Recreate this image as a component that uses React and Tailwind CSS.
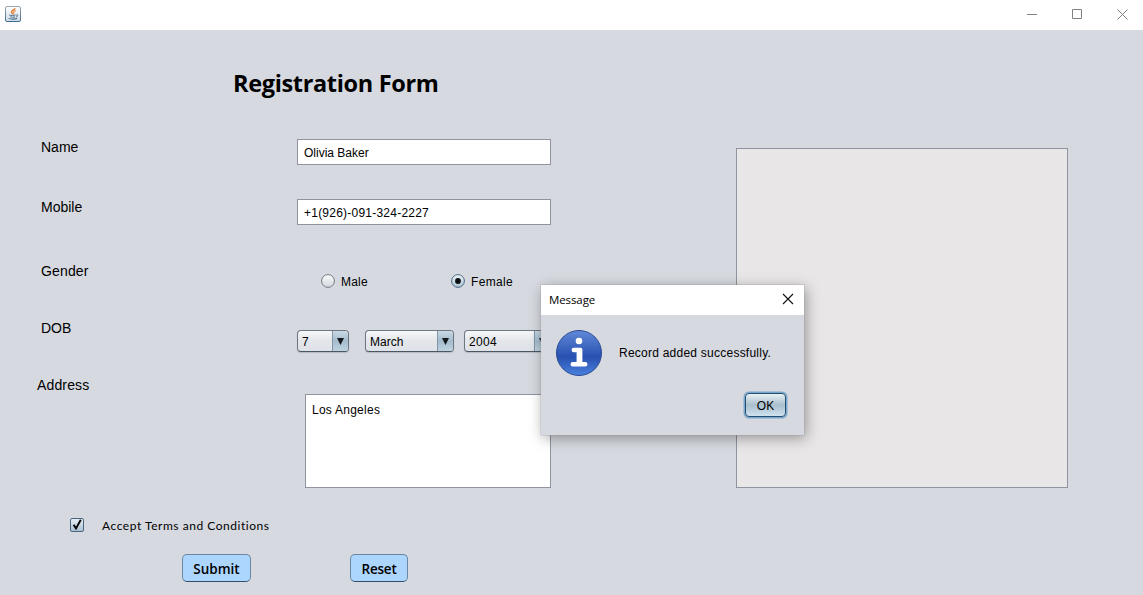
import React from "react";

const SANS = "font-['Liberation_Sans',Arial,sans-serif]";
const HUMAN = "font-['Open_Sans','Noto_Sans',sans-serif]";

function JavaIcon() {
  return (
    <svg width="16" height="16" viewBox="0 0 16 16" fill="none" className="block">
      <defs>
        <linearGradient id="jframe" x1="0" y1="0" x2="0" y2="1">
          <stop offset="0" stopColor="#9aa7b4" />
          <stop offset="1" stopColor="#3f6c8c" />
        </linearGradient>
        <linearGradient id="jback" x1="0" y1="0" x2="0" y2="1">
          <stop offset="0" stopColor="#ffffff" />
          <stop offset="1" stopColor="#cfdbe6" />
        </linearGradient>
      </defs>
      <rect x="0.5" y="0.5" width="15" height="15" rx="1.5" fill="url(#jback)" stroke="url(#jframe)" />
      <path d="M10 2.2C10.2 4 6.4 4.4 6.5 6.2C6.6 7 7.4 7.4 7.6 8.4" stroke="#e27626" strokeWidth="1.4" />
      <path d="M10.8 4.6C8.8 5.3 8.3 5.9 8.9 6.8C9.2 7.3 9.1 7.8 8.5 8.5" stroke="#e58a45" strokeWidth="1.1" />
      <path d="M4.2 9C5.5 9.7 9 9.6 10.6 9" stroke="#4d7390" />
      <path d="M5.2 10.8C6.8 11.4 8.8 11.3 10 10.8" stroke="#4d7390" />
      <path d="M11 8.9C13.4 8.3 13.4 10.6 10.9 11.1" stroke="#4d7390" />
      <path d="M3.6 12.4C5 13.4 10.6 13.3 12.2 12.6" stroke="#4d7390" strokeWidth="1.1" />
    </svg>
  );
}

function TitleBar() {
  return (
    <header className="flex h-[30px] items-start justify-between bg-white">
      <div className="pt-1.5 pl-[5px]">
        <JavaIcon />
      </div>
      <div className="flex items-center gap-[35px] pt-[9px] pr-[15px] text-[#808080]">
        <svg width="11" height="11" viewBox="0 0 11 11" stroke="currentColor" className="overflow-visible"><path d="M2 5.5H12" /></svg>
        <svg width="11" height="11" viewBox="0 0 11 11" fill="none" stroke="currentColor"><path d="M1.5 0.5H10.5V9.5H1.5Z" /></svg>
        <svg width="11" height="11" viewBox="0 0 11 11" stroke="currentColor"><path d="M0.5 0.5L10.5 10.5M10.5 0.5L0.5 10.5" /></svg>
      </div>
    </header>
  );
}

function Label({ children, className = "pl-[41px]" }) {
  return <div className={`w-[297px] shrink-0 text-sm leading-5 ${className}`}>{children}</div>;
}

function TextField({ children, className = "" }) {
  return (
    <div className={`mt-0.5 flex h-[26px] w-[254px] items-center border border-[#8f949e] bg-white pt-px pl-1.5 text-xs ${className}`}>
      {children}
    </div>
  );
}

function Radio({ label, checked, className = "" }) {
  return (
    <div className={`flex h-[14px] items-center text-xs tracking-[0.2px] ${className}`}>
      <svg width="14" height="14" viewBox="0 0 14 14">
        <defs>
          <linearGradient id="radioOff" x1="0" y1="0" x2="0" y2="1">
            <stop offset="0" stopColor="#fbfbfc" />
            <stop offset="1" stopColor="#d3d7dd" />
          </linearGradient>
          <linearGradient id="radioOn" x1="0" y1="0" x2="0" y2="1">
            <stop offset="0" stopColor="#eef4f8" />
            <stop offset="1" stopColor="#a9c1d2" />
          </linearGradient>
        </defs>
        <circle cx="7" cy="7" r="6.4" fill={checked ? "url(#radioOn)" : "url(#radioOff)"} stroke={checked ? "#4c6880" : "#737a85"} />
        {checked && <circle cx="7" cy="7" r="2.9" fill="#0b0d10" />}
      </svg>
      <span className="pt-0.5 pl-1.5">{label}</span>
    </div>
  );
}

function Combo({ value, className, textClass = "" }) {
  return (
    <div className={`flex h-[22px] shrink-0 overflow-hidden rounded-[4px] border border-[#6d7683] border-b-[#4b5663] bg-linear-to-b from-[#f6f7f9] via-[#e3e6ea] to-[#dfe2e8] shadow-[0_1px_1px_#b5bac4] ${className}`}>
      <div className={`flex flex-1 items-center pt-px pl-1 text-xs ${textClass}`}>{value}</div>
      <div className="flex w-4 items-center justify-center border-l border-[#7f95a8] bg-linear-to-b from-[#c9d9e4] via-[#a5bccd] to-[#bfd3e0]">
        <svg width="7" height="7" viewBox="0 0 7 7"><path d="M0 0H7L3.5 7Z" fill="#15181c" /></svg>
      </div>
    </div>
  );
}

function ActionButton({ children, className }) {
  return (
    <div className={`flex h-7 items-center justify-center rounded-[5px] border border-[#6a86a0] border-b-[#33506b] bg-[#add6ff] pt-0.5 text-[13.5px] font-semibold ${HUMAN} ${className}`}>
      {children}
    </div>
  );
}

function MessageDialog() {
  return (
    <div className="absolute top-[285px] left-[541px] flex h-[150px] w-[263px] flex-col bg-[#d6d9df] shadow-[0_0_0_1px_rgba(150,150,155,0.25),2px_3px_13px_rgba(0,0,0,0.36)]">
      <div className="flex h-[30px] items-center justify-between bg-white pr-[11px] pl-2">
        <span className={`text-[11.5px] tracking-[-0.1px] ${HUMAN}`}>Message</span>
        <svg width="10" height="10" viewBox="0 0 10 10" className="-mt-0.5 overflow-visible" stroke="#111" strokeWidth="1.1">
          <path d="M0 0L10 10M10 0L0 10" />
        </svg>
      </div>
      <div className="flex items-center gap-4 pt-[14px] pl-[14px]">
        <svg width="48" height="48" viewBox="0 0 48 48">
          <defs>
            <linearGradient id="infoBall" x1="0" y1="0" x2="0" y2="1">
              <stop offset="0" stopColor="#6189d8" />
              <stop offset="0.4" stopColor="#3a63be" />
              <stop offset="0.58" stopColor="#2850b0" />
              <stop offset="1" stopColor="#4a80de" />
            </linearGradient>
          </defs>
          <circle cx="24" cy="24" r="22.5" fill="url(#infoBall)" stroke="#2a4a92" />
          <circle cx="24" cy="12" r="3.3" fill="#fff" />
          <path d="M18.8 18.8H25.6Q27.4 18.8 27.4 20.6V33H30.2A2.2 2.2 0 0 1 30.2 37.6H17.8A2.2 2.2 0 0 1 17.8 33H21.6V23.2H18.8A2.2 2.2 0 0 1 18.8 18.8Z" fill="#fff" />
        </svg>
        <span className="text-xs tracking-[0.24px]">Record added successfully.</span>
      </div>
      <div className="flex justify-end pt-[16px] pr-[18px]">
        <div className="flex h-6 w-[41px] items-center justify-center rounded-[4px] border border-[#234e73] bg-linear-to-b from-[#eaf1f5] via-[#a9bfcd] to-[#cfe3ef] pt-0.5 text-xs shadow-[0_0_0_1.5px_#7ba6cb]">
          OK
        </div>
      </div>
    </div>
  );
}

export default function App() {
  return (
    <div className={`relative flex h-[595px] w-[1143px] flex-col overflow-hidden bg-[#d6d9df] text-black ${SANS}`}>
      <TitleBar />
      <main className="flex flex-1 items-start">
        <section className="w-[736px] shrink-0">
          <h1 className={`mt-[35px] h-9 pl-[233px] text-[23.5px] leading-9 font-bold tracking-[-0.34px] ${HUMAN}`}>Registration Form</h1>

          <div className="mt-9 flex items-start">
            <Label>Name</Label>
            <TextField>Olivia Baker</TextField>
          </div>
          <div className="mt-8 flex items-start">
            <Label>Mobile</Label>
            <TextField className="tracking-[0.23px]">+1(926)-091-324-2227</TextField>
          </div>
          <div className="mt-9 flex h-[30px] items-start">
            <Label className="pl-[41px] tracking-[0.15px]">Gender</Label>
            <div className="flex pt-[13px] pl-6">
              <Radio label="Male" className="w-[130px]" />
              <Radio label="Female" checked className="tracking-[0.35px]" />
            </div>
          </div>
          <div className="mt-[27px] flex items-start">
            <Label>DOB</Label>
            <div className="flex pt-3">
              <Combo value="7" className="w-[52px]" />
              <Combo value="March" className="ml-4 w-[89px]" />
              <Combo value="2004" className="ml-[10px] w-[87px]" textClass="tracking-[0.3px]" />
            </div>
          </div>
          <div className="mt-[23px] flex items-start">
            <Label className="pl-[37px] tracking-[0.15px]">Address</Label>
            <div className="mt-[19px] ml-2 h-[94px] w-[246px] border border-[#8f949e] bg-white px-1.5 pt-[7px] text-xs tracking-[0.25px]">
              Los Angeles
            </div>
          </div>

          <div className="mt-[27px] flex h-5 items-center gap-[18px] pl-[70px]">
            <svg width="14" height="14" viewBox="0 0 14 14">
              <defs>
                <linearGradient id="checkFill" x1="0" y1="0" x2="0" y2="1">
                  <stop offset="0" stopColor="#e9f0f5" />
                  <stop offset="1" stopColor="#a8c0d1" />
                </linearGradient>
              </defs>
              <rect x="0.5" y="0.5" width="13" height="13" rx="1.5" fill="url(#checkFill)" stroke="#4b6780" />
              <path d="M3.6 6.8L6 10.4L10.8 1.8" fill="none" stroke="#050505" strokeWidth="1.9" />
            </svg>
            <span className="pt-0.5 font-['Lato',sans-serif] text-xs tracking-[0.54px]">Accept Terms and Conditions</span>
          </div>
          <div className="mt-[19px] flex gap-[99px] pl-[182px]">
            <ActionButton className="w-[69px]">Submit</ActionButton>
            <ActionButton className="w-[58px] tracking-[-0.2px]">Reset</ActionButton>
          </div>
        </section>
        <aside className="mt-[118px] h-[340px] w-[332px] border border-[#8f949e] bg-[#e9e6e7]" />
      </main>
      <MessageDialog />
    </div>
  );
}
